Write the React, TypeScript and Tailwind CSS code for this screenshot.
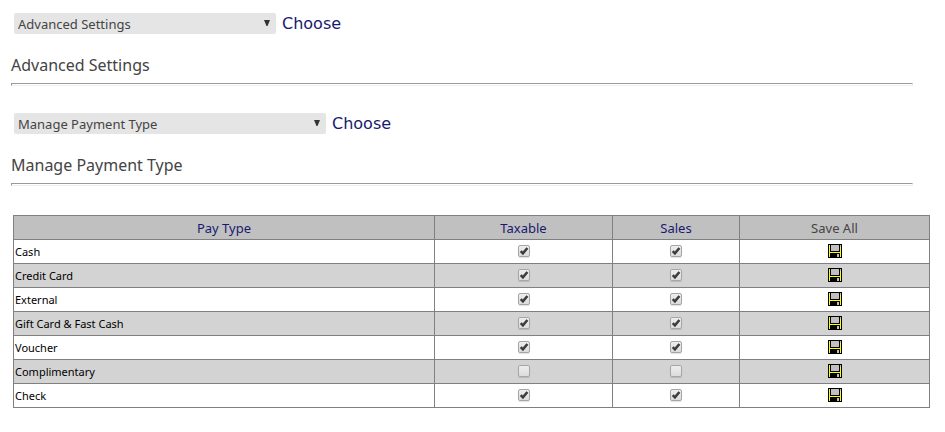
import { useState } from "react";

type PayType = {
  name: string;
  taxable: boolean;
  sales: boolean;
};

const payTypes: PayType[] = [
  { name: "Cash", taxable: true, sales: true },
  { name: "Credit Card", taxable: true, sales: true },
  { name: "External", taxable: true, sales: true },
  { name: "Gift Card & Fast Cash", taxable: true, sales: true },
  { name: "Voucher", taxable: true, sales: true },
  { name: "Complimentary", taxable: false, sales: false },
  { name: "Check", taxable: true, sales: true },
];

const SaveIcon = () => (
  <svg
    width="14"
    height="14"
    viewBox="0 0 14 14"
    shapeRendering="crispEdges"
    aria-hidden="true"
  >
    <path d="M0 0h14v14H0z" fill="#000" />
    <path d="M1 1h1v12H1zM12 3h1v10h-1zM2 8h10v1H2z" fill="#ff0" />
    <path d="M3 1h8v6H3zM12 1h1v2h-1zM9 10h2v3H9z" fill="#c0c0c0" />
  </svg>
);

const CheckBox = ({
  label,
  defaultChecked,
}: {
  label: string;
  defaultChecked: boolean;
}) => {
  const [checked, setChecked] = useState(defaultChecked);

  return (
    <label className="relative block h-[13px] w-3 mx-auto">
      <input
        type="checkbox"
        aria-label={label}
        checked={checked}
        onChange={(e) => setChecked(e.target.checked)}
        className="block size-3 appearance-none rounded-xs border border-[#a6a6a6] bg-linear-to-b from-[#ededed] to-[#dcdcdc] shadow-[0_1px_1px_rgba(0,0,0,0.12)]"
      />
      {checked && (
        <svg
          viewBox="0 0 12 12"
          className="pointer-events-none absolute inset-0 size-3"
          aria-hidden="true"
        >
          <path
            d="M2.7 6.2L4.9 8.4L9.4 3"
            fill="none"
            stroke="#3c3c3c"
            strokeWidth="2.5"
          />
        </svg>
      )}
    </label>
  );
};

const Picker = ({
  label,
  option,
  width,
}: {
  label: string;
  option: string;
  width: string;
}) => (
  <form
    className="flex items-center gap-1.5 pl-[3px]"
    onSubmit={(e) => e.preventDefault()}
  >
    <div className={`relative ${width}`}>
      <select
        aria-label={label}
        className="block h-[21px] w-full appearance-none rounded-xs bg-[#e5e5e5] pl-1 text-[13px] leading-5 text-[#444]"
      >
        <option>{option}</option>
      </select>
      <svg
        viewBox="0 0 6 6"
        className="pointer-events-none absolute top-[7px] right-1.5 size-1.5"
        aria-hidden="true"
      >
        <path d="M0 0h6L3.5 6h-1z" fill="#333" />
      </svg>
    </div>
    <button
      type="submit"
      className="font-['DejaVu_Sans',sans-serif] text-base leading-5 text-[#191970]"
    >
      Choose
    </button>
  </form>
);

const Title = ({ children }: { children: string }) => (
  <div className="pt-[19px] pr-[17px]">
    <h2 className="text-base leading-6 text-[#444]">{children}</h2>
    <hr className="mt-1.5 h-[3px] border border-t-[#9a9a9a] border-r-[#eee] border-b-[#eee] border-l-[#9a9a9a]" />
  </div>
);

const App = () => {
  return (
    <main className="bg-white pt-[13px] pr-[15px] pb-6 pl-[11px] font-['Noto_Sans',sans-serif]">
      <Picker
        label="Settings group"
        option="Advanced Settings"
        width="w-[262px]"
      />
      <Title>Advanced Settings</Title>

      <div className="pt-[27px]">
        <Picker
          label="Setting"
          option="Manage Payment Type"
          width="w-[312px]"
        />
        <Title>Manage Payment Type</Title>
      </div>

      <div className="pt-[29px] pl-0.5">
        <table className="w-full table-fixed border-collapse text-[#191970]">
          <colgroup>
            <col />
            <col className="w-[178px]" />
            <col className="w-[127px]" />
            <col className="w-[190px]" />
          </colgroup>
          <thead>
            <tr className="h-6 bg-[#c0c0c0] text-[13px] leading-5">
              <th className="border border-[#808080] p-0 font-normal">
                Pay Type
              </th>
              <th className="border border-[#808080] p-0 font-normal">
                Taxable
              </th>
              <th className="border border-[#808080] p-0 font-normal">
                Sales
              </th>
              <th className="border border-[#808080] p-0 font-normal text-[#444]">
                Save All
              </th>
            </tr>
          </thead>
          <tbody>
            {payTypes.map((type) => (
              <tr key={type.name} className="h-6 odd:bg-white even:bg-[#d3d3d3]">
                <td className="border border-[#808080] py-0 pr-0 pl-px text-[11px] leading-5 text-black">
                  {type.name}
                </td>
                <td className="border border-[#808080] p-0">
                  <CheckBox
                    label={`${type.name} taxable`}
                    defaultChecked={type.taxable}
                  />
                </td>
                <td className="border border-[#808080] p-0">
                  <CheckBox
                    label={`${type.name} sales`}
                    defaultChecked={type.sales}
                  />
                </td>
                <td className="border border-[#808080] p-0">
                  <button
                    type="button"
                    aria-label={`Save ${type.name}`}
                    className="mx-auto block pb-px pl-px"
                  >
                    <SaveIcon />
                  </button>
                </td>
              </tr>
            ))}
          </tbody>
        </table>
      </div>
    </main>
  );
};

export default App;
